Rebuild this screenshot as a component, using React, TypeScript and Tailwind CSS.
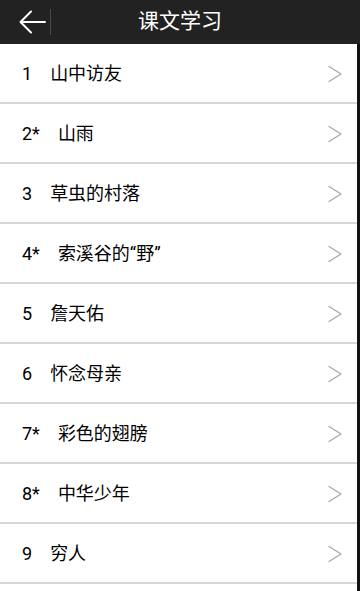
import React from "react";

const items = [
  ["1", "山中访友"],
  ["2*", "山雨"],
  ["3", "草虫的村落"],
  ["4*", "索溪谷的“野”"],
  ["5", "詹天佑"],
  ["6", "怀念母亲"],
  ["7*", "彩色的翅膀"],
  ["8*", "中华少年"],
  ["9", "穷人"],
];

export default function App() {
  return (
    <div
      className="w-[360px] h-[591px] bg-white overflow-hidden flex flex-col"
      style={{ fontFamily: 'Roboto, "Noto Sans CJK SC", sans-serif' }}
    >
      <div className="h-[44px] shrink-0 bg-[#222222] flex items-center relative">
        <div className="w-[50px] h-full flex items-center pl-[19px]">
          <svg width="27" height="24" viewBox="0 0 27 24" fill="none">
            <path d="M26 12H2M12 1.5L1.5 12L12 22.5" stroke="#ffffff" strokeWidth="2" strokeLinecap="round" strokeLinejoin="round" />
          </svg>
        </div>
        <div className="w-px h-[26px] bg-[#4a4a4a]" />
        <div className="absolute inset-0 flex items-center justify-center text-white text-[21px] pointer-events-none">
          课文学习
        </div>
      </div>
      <div className="flex-1 flex">
        <div className="flex-1 flex flex-col">
          {items.map(([n, t]) => (
            <div key={n} className="h-[60px] shrink-0 flex items-center border-b-2 border-[#d6d6d6] pl-[22px] pr-[14px] pt-[1px]">
              <span className="text-[18px] text-black mr-[18px]">{n}</span>
              <span className="text-[18px] text-black flex-1">{t}</span>
              <svg width="16" height="20" viewBox="0 0 16 20" fill="none">
                <path d="M2 2.5L14 10L2 17.5" stroke="#ababab" strokeWidth="1.4" strokeLinecap="round" strokeLinejoin="round" />
              </svg>
            </div>
          ))}
        </div>
        <div className="w-[3px] bg-[#111111]" />
      </div>
    </div>
  );
}
